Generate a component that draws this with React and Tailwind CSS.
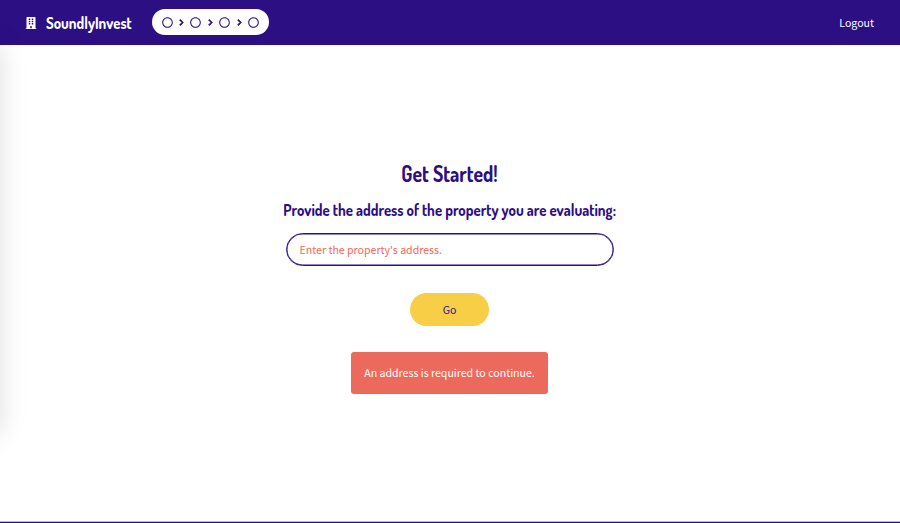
import { FaBuilding, FaChevronRight, FaRegCircle } from "react-icons/fa";

function Steps() {
  return (
    <div className="ml-[20px] flex h-[26px] w-[117px] items-center justify-between rounded-full bg-white pr-[10px] pl-[9.5px] text-[#2d0f84]">
      {[0, 1, 2, 3].map((step) => (
        <div key={step} className="contents">
          {step > 0 && <FaChevronRight className="size-[7px] stroke-[#2d0f84] stroke-[50px]" />}
          <FaRegCircle className="size-[11px]" />
        </div>
      ))}
    </div>
  );
}

export default function App() {
  return (
    <div className="relative flex h-[523px] flex-col overflow-hidden bg-white font-['Noto_Sans_CJK_SC',sans-serif] text-[10.6px] text-[#2d0f84]">
      <header className="flex h-[45px] shrink-0 items-center bg-[#2d0f84] pr-[26px] pb-[1px] pl-[25px] text-white">
        <FaBuilding className="mt-[1px] size-[12px]" />
        <div className="ml-[9px] w-[86px]">
          <span className="mt-[1px] block origin-left scale-x-[0.87] font-['Dosis','Noto_Sans_CJK_SC',sans-serif] text-[17px] leading-[20px] font-bold whitespace-nowrap">
            SoundlyInvest
          </span>
        </div>
        <Steps />
        <a href="#" className="mt-[1px] ml-auto">Logout</a>
      </header>
      <main className="flex flex-1 flex-col items-center pt-[114px] pr-[1px]">
        <h1 className="scale-x-[0.9] font-['Dosis','Noto_Sans_CJK_SC',sans-serif] text-[22px] leading-[28px] font-bold">
          Get Started!
        </h1>
        <h2 className="mt-[11px] scale-x-[0.877] font-['Dosis','Noto_Sans_CJK_SC',sans-serif] text-[17px] leading-[24px] font-bold whitespace-nowrap">
          Provide the address of the property you are evaluating:
        </h2>
        <input
          aria-label="Address"
          placeholder="Enter the property's address."
          className="mt-[11px] h-[33px] w-[328px] rounded-full border-[1.5px] border-[#2d0f84] px-[13px] shadow-[inset_0_0_0_0.5px_#2d0f84] placeholder:text-[#ec6a5c]"
        />
        <button className="mt-[27px] h-[33px] w-[79px] rounded-full bg-[#f7ce46]">Go</button>
        <div role="alert" className="mt-[26px] flex h-[42px] w-[197px] items-center justify-center rounded-[3px] bg-[#ec6a5c] text-white">
          An address is required to continue.
        </div>
      </main>
      <footer className="h-[2px] shrink-0 border-t border-[#c0b7da] bg-[#2d0f84]" />
      <aside className="absolute top-[45px] -left-[200px] h-[389px] w-[200px] shadow-[0_0_26px_rgba(0,0,0,0.13)] [clip-path:inset(-30px_-40px_-40px_0)]" />
    </div>
  );
}
